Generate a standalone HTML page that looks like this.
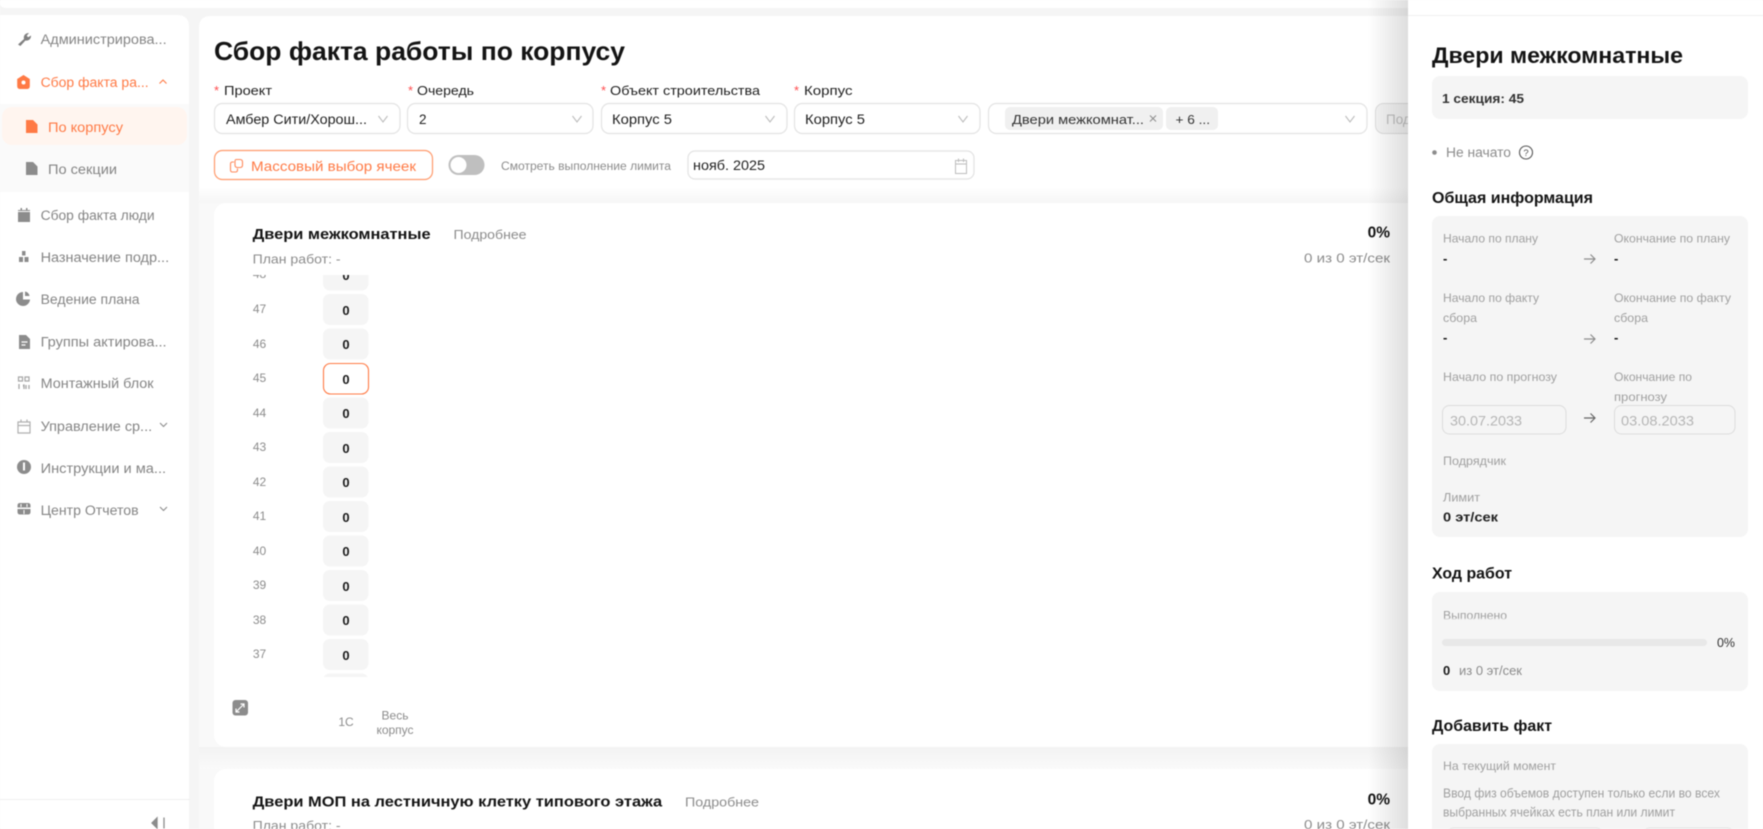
<!DOCTYPE html>
<html lang="ru"><head><meta charset="utf-8"><title>Сбор факта работы по корпусу</title>
<style>
html,body{margin:0;padding:0;background:#f5f5f5;width:1763px;height:829px;overflow:hidden}
svg{display:block;filter:blur(0.45px)}
text{font-family:"Liberation Sans","Noto Sans CJK SC",sans-serif;white-space:pre}
.s{font-size:13.5px;fill:#858585}
.o{fill:#ff7a45}
.l{font-size:13px;fill:#1f1f1f}
.v{font-size:13.5px;fill:#1f1f1f}
.g{font-size:12px;fill:#a0a0a0}
.h{font-weight:700;fill:#141414}
.f{font-size:12px;fill:#8c8c8c}
.z{font-size:13px;font-weight:700;fill:#1a1a1a}
.box{fill:#fff;stroke:#e3e3e3;stroke-width:1.2}
.ch{fill:none;stroke:#bdbdbd;stroke-width:1.1}
.cg{fill:none;stroke:#8c8c8c;stroke-width:1.1}
.ar{fill:none;stroke:#8c8c8c;stroke-width:1.2}
</style></head><body>
<svg xmlns="http://www.w3.org/2000/svg" width="1763" height="829" viewBox="0 0 1763 829">
<defs>
<linearGradient id="shade" x1="0" x2="1" y1="0" y2="0"><stop offset="0" stop-color="#000" stop-opacity="0"/><stop offset="1" stop-color="#000" stop-opacity=".13"/></linearGradient>
<linearGradient id="hd" x1="0" x2="0" y1="0" y2="1"><stop offset="0" stop-color="#fff"/><stop offset="1" stop-color="#f6f6f6"/></linearGradient>
<linearGradient id="gap" x1="0" x2="0" y1="0" y2="1"><stop offset="0" stop-color="#f3f3f3"/><stop offset="1" stop-color="#fafafa"/></linearGradient>
<clipPath id="grid"><rect x="240" y="275" width="200" height="402"/></clipPath>
<clipPath id="vs"><rect x="380" y="708" width="40" height="40"/></clipPath>
</defs>
<rect width="1763" height="829" fill="#f5f5f5"/>
<!-- top bar -->
<path d="M0 0H1763V8H8Q0 8 0 4Z" fill="#fff"/>
<!-- sidebar -->
<path d="M0 15H177Q189 15 189 27V829H0Z" fill="#fff"/>
<rect x="0" y="104" width="189" height="88" fill="#fafafa"/>
<rect x="2" y="107" width="185" height="38" rx="10" fill="#fff5ef"/>
<line x1="0" x2="190" y1="799.5" y2="799.5" stroke="#efefef"/>
<path d="M157 818l-5 5 5 5zM164 817.500v11" fill="#8c8c8c" stroke="#8c8c8c" stroke-width="1.300"/>
<!-- sidebar icons -->
<path d="M18 44.500l6-5.500c-.8-3 1-6 5-6l-2.300 2.800 1.500 1.500 2.800-1.800c.2 3.500-2.800 5.800-5.600 5l-5 5.500z" fill="#808080"/>
<path d="M23.500 75l6.300 4v7q0 3-3 3h-6.600q-3 0-3-3v-7z" fill="#ff7a45"/><circle cx="23.500" cy="82.500" r="2" fill="#fff"/>
<path d="M26 120h7l4.500 4.500V133H26z" fill="#ff7a45"/>
<path d="M26 162h7l4.500 4.500V175H26z" fill="#8c8c8c"/>
<path d="M18 212h12v10H18zM18 210h12v1H18zM20.500 208h1.500v3h-1.500zM26 208h1.500v3H26z" fill="#8c8c8c"/>
<path d="M22 251h3.500v4.500H22zM19 257h4v5h-4zM24.500 257h4v5h-4z" fill="#8c8c8c"/>
<path d="M23 292v7.500h7a7 7 0 1 1-7-7.500z" fill="#8c8c8c"/><path d="M25 291.500a5.500 5.500 0 0 1 4.500 4.500H25z" fill="#8c8c8c"/>
<path d="M19 335h7l4 4v10H19z" fill="#8c8c8c"/><path d="M21.500 342h6M21.500 345h4" stroke="#fff" stroke-width="1.200"/>
<path d="M18.500 377h4v4h-4zM25 377h4v4h-4z" fill="none" stroke="#a6a6a6" stroke-width="1.200"/><path d="M19 384v5M23 385h1v4M26 385v4M29 385v4" stroke="#a6a6a6" stroke-width="1.300"/>
<path d="M18 422h12v11H18zM18 425.500h12M21 419.500v3M27 419.500v3" fill="none" stroke="#b0b0b0" stroke-width="1.200"/>
<circle cx="24" cy="467" r="7" fill="#8c8c8c"/><rect x="23" y="462.500" width="2" height="8" fill="#fff"/>
<path d="M20 503h8q2.500 0 2.500 2.500v2H17.500v-2Q17.500 503 20 503zM17.500 509h13v3q0 2.500-2.500 2.500h-8q-2.500 0-2.500-2.500z" fill="#8c8c8c"/><path d="M21 504v3M27 504v3M24 510v4" stroke="#fff"/>
<!-- sidebar text -->
<text class="s" x="40.600" y="44" textLength="126" lengthAdjust="spacingAndGlyphs">Администрирова...</text>
<text class="s o" x="40.600" y="87" textLength="108" lengthAdjust="spacingAndGlyphs">Сбор факта ра...</text>
<path d="M159.500 83.500l3.500-3.500 3.500 3.500" fill="none" stroke="#ff7a45" stroke-width="1.100"/>
<text class="s o" x="48" y="132" textLength="75" lengthAdjust="spacingAndGlyphs">По корпусу</text>
<text class="s" x="48" y="174" textLength="69" lengthAdjust="spacingAndGlyphs">По секции</text>
<text class="s" x="40.600" y="220" textLength="114" lengthAdjust="spacingAndGlyphs">Сбор факта люди</text>
<text class="s" x="40.600" y="262" textLength="128.500" lengthAdjust="spacingAndGlyphs">Назначение подр...</text>
<text class="s" x="40.600" y="304" textLength="99" lengthAdjust="spacingAndGlyphs">Ведение плана</text>
<text class="s" x="40.600" y="346.500" textLength="126" lengthAdjust="spacingAndGlyphs">Группы актирова...</text>
<text class="s" x="40.600" y="388" textLength="113" lengthAdjust="spacingAndGlyphs">Монтажный блок</text>
<text class="s" x="40.600" y="431" textLength="111.500" lengthAdjust="spacingAndGlyphs">Управление ср...</text>
<path d="M160 423l3.500 3.500 3.500-3.500" class="cg"/>
<text class="s" x="40.600" y="473" textLength="125.500" lengthAdjust="spacingAndGlyphs">Инструкции и ма...</text>
<text class="s" x="40.600" y="515" textLength="98" lengthAdjust="spacingAndGlyphs">Центр Отчетов</text>
<path d="M160 507l3.500 3.500 3.500-3.500" class="cg"/>
<!-- main -->
<path d="M199 829V28Q199 16 211 16H1420V829Z" fill="#f9f9f9"/>
<path d="M199 187V28Q199 16 211 16H1420V187Z" fill="#fff"/>
<rect x="199" y="187" width="1221" height="16" fill="url(#hd)"/>
<text x="214" y="60" font-size="26" font-weight="700" fill="#141414" textLength="411" lengthAdjust="spacingAndGlyphs">Сбор факта работы по корпусу</text>
<!-- labels -->
<g fill="#ff4d4f" font-size="13"><text x="214" y="95">*</text><text x="408" y="95">*</text><text x="601" y="95">*</text><text x="794" y="95">*</text></g>
<text class="l" x="224" y="95" textLength="48" lengthAdjust="spacingAndGlyphs">Проект</text>
<text class="l" x="417" y="95" textLength="57" lengthAdjust="spacingAndGlyphs">Очередь</text>
<text class="l" x="610" y="95" textLength="150" lengthAdjust="spacingAndGlyphs">Объект строительства</text>
<text class="l" x="804" y="95" textLength="48.500" lengthAdjust="spacingAndGlyphs">Корпус</text>
<!-- selects -->
<rect class="box" x="214.500" y="103.500" width="185.500" height="30" rx="8"/>
<rect class="box" x="407.500" y="103.500" width="185.500" height="30" rx="8"/>
<rect class="box" x="601.500" y="103.500" width="185.500" height="30" rx="8"/>
<rect class="box" x="794.500" y="103.500" width="185.500" height="30" rx="8"/>
<rect class="box" x="988.500" y="103.500" width="378.500" height="30" rx="8"/>
<rect x="1375.500" y="103.500" width="60" height="30" rx="8" fill="#f5f5f5" stroke="#dedede"/>
<text x="1386" y="124" font-size="13.500" fill="#bfbfbf">Подрядчик</text>
<text class="v" x="226" y="124" textLength="141" lengthAdjust="spacingAndGlyphs">Амбер Сити/Хорош...</text>
<text class="v" x="419" y="124">2</text>
<text class="v" x="612" y="124" textLength="60" lengthAdjust="spacingAndGlyphs">Корпус 5</text>
<text class="v" x="805" y="124" textLength="60" lengthAdjust="spacingAndGlyphs">Корпус 5</text>
<g><path class="ch" d="M378.500 116l4.500 6 4.500-6"/><path class="ch" d="M572.500 116l4.500 6 4.500-6"/><path class="ch" d="M765.500 116l4.500 6 4.500-6"/><path class="ch" d="M958.500 116l4.500 6 4.500-6"/><path class="ch" d="M1345.500 116l4.500 6 4.500-6"/></g>
<rect x="1005" y="107" width="158" height="23" rx="5" fill="#f0f0f0"/>
<rect x="1166" y="107" width="52" height="23" rx="5" fill="#f0f0f0"/>
<text x="1012" y="124" font-size="13" fill="#333" textLength="132" lengthAdjust="spacingAndGlyphs">Двери межкомнат...</text>
<path d="M1150 115.500l6 6M1156 115.500l-6 6" stroke="#8c8c8c"/>
<text x="1175.500" y="124" font-size="13" fill="#333" textLength="34.500" lengthAdjust="spacingAndGlyphs">+ 6 ...</text>
<!-- button row -->
<rect x="214.500" y="150.500" width="218" height="29" rx="8" fill="#fff" stroke="#ff9a6c" stroke-width="1.200"/>
<path d="M234 162h-1.500q-2 0-2 2v6q0 2 2 2h3q2 0 2-2v-1.500M236 159.500h4q2.500 0 2.500 2.500v3q0 2.500-2.500 2.500h-2.500q-2.500 0-2.500-2.500v-3q0-2.500 1-2.500z" fill="none" stroke="#ff8a5c" stroke-width="1.100"/>
<text x="251" y="171" font-size="14" fill="#ff7a45" textLength="165" lengthAdjust="spacingAndGlyphs">Массовый выбор ячеек</text>
<rect x="448.500" y="155" width="36" height="20" rx="10" fill="#bfbfbf"/>
<circle cx="458.500" cy="165" r="8" fill="#fff"/>
<text x="501" y="170" font-size="11.500" fill="#8c8c8c" textLength="170" lengthAdjust="spacingAndGlyphs">Смотреть выполнение лимита</text>
<rect class="box" x="688" y="151" width="286" height="28" rx="7"/>
<text class="v" x="693" y="170" textLength="72" lengthAdjust="spacingAndGlyphs">нояб. 2025</text>
<path d="M955.500 160.500h11v13h-11zM955.500 164h11M958.500 158.500v3.500M963.500 158.500v3.500" fill="none" stroke="#bdbdbd"/>
<!-- card 1 -->
<rect x="214" y="203" width="1210" height="544" rx="12" fill="#fff"/>
<text class="h" x="252.600" y="239" font-size="15" textLength="178" lengthAdjust="spacingAndGlyphs">Двери межкомнатные</text>
<text x="453.500" y="239" font-size="13" fill="#8c8c8c" textLength="73" lengthAdjust="spacingAndGlyphs">Подробнее</text>
<text x="252.600" y="263.500" font-size="13" fill="#8c8c8c" textLength="88" lengthAdjust="spacingAndGlyphs">План работ: -</text>
<text class="h" x="1390" y="237.500" font-size="15.500" text-anchor="end">0%</text>
<text x="1304" y="262.500" font-size="12.500" fill="#8c8c8c" textLength="86" lengthAdjust="spacingAndGlyphs">0 из 0 эт/сек</text>
<g clip-path="url(#grid)">
<g fill="#f5f5f5">
<rect x="323" y="259.500" width="45.500" height="31" rx="7"/><rect x="323" y="294" width="45.500" height="31" rx="7"/><rect x="323" y="328.500" width="45.500" height="31" rx="7"/><rect x="323" y="397.500" width="45.500" height="31" rx="7"/><rect x="323" y="432" width="45.500" height="31" rx="7"/><rect x="323" y="466.500" width="45.500" height="31" rx="7"/><rect x="323" y="501" width="45.500" height="31" rx="7"/><rect x="323" y="535.500" width="45.500" height="31" rx="7"/><rect x="323" y="570" width="45.500" height="31" rx="7"/><rect x="323" y="604.500" width="45.500" height="31" rx="7"/><rect x="323" y="639" width="45.500" height="31" rx="7"/><rect x="323" y="673.500" width="45.500" height="31" rx="7"/>
</g>
<rect x="323.500" y="363.500" width="45" height="30.500" rx="7" fill="#fff" stroke="#ff7a45" stroke-width="1.100"/>
<g text-anchor="middle">
<text class="z" x="346" y="280">0</text><text class="z" x="346" y="315">0</text><text class="z" x="346" y="349">0</text><text class="z" x="346" y="384">0</text><text class="z" x="346" y="418">0</text><text class="z" x="346" y="453">0</text><text class="z" x="346" y="487">0</text><text class="z" x="346" y="522">0</text><text class="z" x="346" y="556">0</text><text class="z" x="346" y="591">0</text><text class="z" x="346" y="625">0</text><text class="z" x="346" y="660">0</text>
</g>
<g text-anchor="middle">
<text class="f" x="259.500" y="278">48</text><text class="f" x="259.500" y="313">47</text><text class="f" x="259.500" y="348">46</text><text class="f" x="259.500" y="382">45</text><text class="f" x="259.500" y="417">44</text><text class="f" x="259.500" y="451">43</text><text class="f" x="259.500" y="486">42</text><text class="f" x="259.500" y="520">41</text><text class="f" x="259.500" y="555">40</text><text class="f" x="259.500" y="589">39</text><text class="f" x="259.500" y="624">38</text><text class="f" x="259.500" y="658">37</text>
</g>
</g>
<rect x="232.500" y="700" width="15.500" height="15.500" rx="3" fill="#8c8c8c"/>
<path d="M236 712l8-8M240.500 704h3.500v3.500M236 708.500v3.500h3.500" fill="none" stroke="#fff" stroke-width="1.200"/>
<text class="f" x="346" y="726" text-anchor="middle">1С</text>
<g clip-path="url(#vs)"><text class="f" x="395" y="719.500" text-anchor="middle">Весь</text></g>
<text class="f" x="395" y="734" text-anchor="middle">корпус</text>
<!-- gap + card 2 -->
<rect x="199" y="747" width="1221" height="22" fill="url(#gap)"/>
<rect x="214" y="769" width="1210" height="80" rx="12" fill="#fff"/>
<text class="h" x="252.600" y="806.500" font-size="15" textLength="409.500" lengthAdjust="spacingAndGlyphs">Двери МОП на лестничную клетку типового этажа</text>
<text x="685" y="806.500" font-size="13" fill="#8c8c8c" textLength="74" lengthAdjust="spacingAndGlyphs">Подробнее</text>
<text x="252.600" y="830" font-size="13" fill="#8c8c8c" textLength="88" lengthAdjust="spacingAndGlyphs">План работ: -</text>
<text class="h" x="1390" y="804.500" font-size="15.500" text-anchor="end">0%</text>
<text x="1304" y="829" font-size="12.500" fill="#8c8c8c" textLength="86" lengthAdjust="spacingAndGlyphs">0 из 0 эт/сек</text>
<!-- panel -->
<rect x="1368" y="0" width="40" height="829" fill="url(#shade)"/>
<rect x="1408" y="0" width="355" height="829" fill="#fff"/>
<line x1="1408" x2="1763" y1="15.500" y2="15.500" stroke="#f0f0f0"/>
<text class="h" x="1432" y="63" font-size="22" textLength="251" lengthAdjust="spacingAndGlyphs">Двери межкомнатные</text>
<rect x="1432" y="76" width="316" height="43" rx="8" fill="#f5f5f5"/>
<text x="1442" y="103" font-size="13" font-weight="700" fill="#333" textLength="82" lengthAdjust="spacingAndGlyphs">1 секция: 45</text>
<circle cx="1434.500" cy="152.500" r="2.300" fill="#8c8c8c"/>
<text x="1446" y="157" font-size="13.500" fill="#8c8c8c" textLength="65" lengthAdjust="spacingAndGlyphs">Не начато</text>
<circle cx="1526" cy="152.500" r="6.500" fill="none" stroke="#555" stroke-width="1.100"/>
<text x="1526" y="156" font-size="9.500" fill="#555" text-anchor="middle">?</text>
<text class="h" x="1432" y="203" font-size="15.500" textLength="161" lengthAdjust="spacingAndGlyphs">Общая информация</text>
<rect x="1432" y="216" width="316" height="321" rx="8" fill="#f5f5f5"/>
<text class="g" x="1443" y="242.500" textLength="95" lengthAdjust="spacingAndGlyphs">Начало по плану</text>
<text class="g" x="1614" y="242.500" textLength="116" lengthAdjust="spacingAndGlyphs">Окончание по плану</text>
<text class="z" x="1443" y="263">-</text><text class="z" x="1614" y="263">-</text>
<path class="ar" d="M1584 259h11M1590.500 254.500l4.500 4.500-4.500 4.500"/>
<text class="g" x="1443" y="302" textLength="96" lengthAdjust="spacingAndGlyphs">Начало по факту</text>
<text class="g" x="1443" y="322" textLength="34" lengthAdjust="spacingAndGlyphs">сбора</text>
<text class="g" x="1614" y="302" textLength="117" lengthAdjust="spacingAndGlyphs">Окончание по факту</text>
<text class="g" x="1614" y="322" textLength="34" lengthAdjust="spacingAndGlyphs">сбора</text>
<text class="z" x="1443" y="342">-</text><text class="z" x="1614" y="342">-</text>
<path class="ar" d="M1584 339h11M1590.500 334.500l4.500 4.500-4.500 4.500"/>
<text class="g" x="1443" y="381" textLength="114" lengthAdjust="spacingAndGlyphs">Начало по прогнозу</text>
<text class="g" x="1614" y="381" textLength="78" lengthAdjust="spacingAndGlyphs">Окончание по</text>
<text class="g" x="1614" y="401" textLength="53" lengthAdjust="spacingAndGlyphs">прогнозу</text>
<rect x="1442.500" y="405.500" width="123.500" height="28.500" rx="7" fill="#f5f5f5" stroke="#dcdcdc"/>
<rect x="1614.500" y="405.500" width="120.500" height="28.500" rx="7" fill="#f5f5f5" stroke="#dcdcdc"/>
<text x="1450" y="425.500" font-size="14" fill="#b5b5b5" textLength="72" lengthAdjust="spacingAndGlyphs">30.07.2033</text>
<text x="1621" y="425.500" font-size="14" fill="#b5b5b5" textLength="73" lengthAdjust="spacingAndGlyphs">03.08.2033</text>
<path class="ar" d="M1584 418h11M1590.500 413.500l4.500 4.500-4.500 4.500" style="stroke:#666"/>
<text class="g" x="1443" y="465" textLength="63" lengthAdjust="spacingAndGlyphs">Подрядчик</text>
<text class="g" x="1443" y="501.500" textLength="37" lengthAdjust="spacingAndGlyphs">Лимит</text>
<text x="1443" y="521.500" font-size="13" font-weight="700" fill="#222" textLength="55" lengthAdjust="spacingAndGlyphs">0 эт/сек</text>
<text class="h" x="1432" y="578.500" font-size="15.500" textLength="80" lengthAdjust="spacingAndGlyphs">Ход работ</text>
<rect x="1432" y="592" width="316" height="99" rx="8" fill="#f5f5f5"/>
<text class="g" x="1443" y="619.500" textLength="64" lengthAdjust="spacingAndGlyphs">Выполнено</text>
<rect x="1442" y="618.500" width="80" height="3" fill="#f5f5f5" opacity=".6"/>
<rect x="1442" y="639" width="265" height="7" rx="3.500" fill="#e8e8e8"/>
<text x="1717" y="647" font-size="13" fill="#333" textLength="18" lengthAdjust="spacingAndGlyphs">0%</text>
<text class="z" x="1443" y="675">0</text>
<text x="1459" y="675" font-size="12.500" fill="#8c8c8c" textLength="63" lengthAdjust="spacingAndGlyphs">из 0 эт/сек</text>
<text class="h" x="1432" y="731" font-size="16" textLength="120" lengthAdjust="spacingAndGlyphs">Добавить факт</text>
<rect x="1432" y="744" width="316" height="100" rx="8" fill="#f5f5f5"/>
<text class="g" x="1443" y="770" textLength="113" lengthAdjust="spacingAndGlyphs">На текущий момент</text>
<text class="g" x="1443" y="797.500" style="font-size:12.500px" textLength="277" lengthAdjust="spacingAndGlyphs">Ввод физ объемов доступен только если во всех</text>
<text class="g" x="1443" y="816.500" style="font-size:12.500px" textLength="232" lengthAdjust="spacingAndGlyphs">выбранных ячейках есть план или лимит</text>
<rect x="1447.500" y="828" width="155" height="12" rx="6" fill="#fff" stroke="#e0e0e0"/>
<rect x="1643.500" y="828" width="90" height="12" rx="6" fill="#fff" stroke="#e0e0e0"/>
</svg>
</body></html>
